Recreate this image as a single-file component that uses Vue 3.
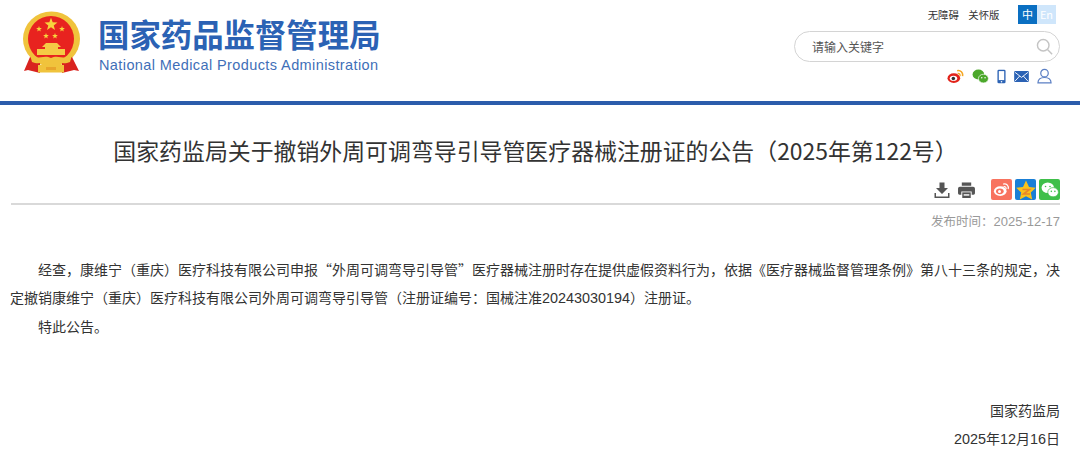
<script setup>
// 五角星顶点
function star(cx, cy, r) {
  const pts = [];
  for (let i = 0; i < 10; i++) {
    const rad = i % 2 ? r * 0.42 : r;
    const a = (Math.PI / 5) * i - Math.PI / 2;
    pts.push((cx + rad * Math.cos(a)).toFixed(2) + ',' + (cy + rad * Math.sin(a)).toFixed(2));
  }
  return pts.join(' ');
}
const smallStars = [
  [17, 18],
  [40, 18],
  [24, 25],
  [33, 25],
];
</script>

<template>
  <div class="page">
    <header class="head">
      <div class="brand">
        <svg class="emblem" viewBox="0 0 60 62" width="60" height="62">
          <!-- 麦穗外环 -->
          <ellipse cx="29.5" cy="28" rx="28.5" ry="27.5" fill="#f0c33c" />
          <circle cx="29" cy="28" r="23" fill="#e8231f" />
          <!-- 五星 -->
          <polygon :points="star(29, 13.5, 6.8)" fill="#f7d33d" />
          <polygon v-for="s in smallStars" :key="s[0]" :points="star(s[0], s[1], 3)" fill="#f7d33d" />
          <!-- 天安门 -->
          <path d="M20 36 L24 32 H35 L39 36 H36 V38 H43 V44 H15 V38 H23 V36 Z" fill="#f5cb45" />
          <!-- 绶带 -->
          <path d="M8 46 L18 50 L18 62 L6 59 L2 60 Z" fill="#d9231f" />
          <path d="M50 46 L40 50 L40 62 L52 59 L57 60 Z" fill="#d9231f" />
          <path d="M8 44 C14 50 22 43 29 47 C36 43 44 50 50 44 L48 51 C42 54 36 50 29 54 C22 50 16 54 10 51 Z" fill="#f0c33c" />
          <rect x="16" y="54" width="26" height="7.5" fill="#f0c33c" />
          <rect x="24" y="56" width="10" height="3" fill="#e8a52c" />
        </svg>
        <div class="brand-text">
          <div class="brand-cn">国家药品监督管理局</div>
          <div class="brand-en">National Medical Products Administration</div>
        </div>
      </div>
      <div class="tools">
        <div class="links">
          <span>无障碍</span>
          <span>关怀版</span>
          <div class="lang"><b class="on">中</b><b class="off">En</b></div>
        </div>
        <div class="search">
          <span>请输入关键字</span>
          <svg viewBox="0 0 20 20" width="17" height="17" fill="none" stroke="#c4c4c4" stroke-width="1.7">
            <circle cx="8.5" cy="8.5" r="6.8" />
            <path d="M13.5 13.5 L19 19" />
          </svg>
        </div>
        <div class="quick">
          <!-- 微博 -->
          <svg viewBox="0 0 20 18" width="17" height="15">
            <ellipse cx="8" cy="11" rx="7.6" ry="5.8" fill="#e2231a" />
            <ellipse cx="7.6" cy="11.2" rx="4.4" ry="3.2" fill="#fff" />
            <circle cx="7.4" cy="11.4" r="2.1" fill="#333" />
            <path d="M12 2 C16 1 19.4 4.5 18.4 8.5" fill="none" stroke="#f5a623" stroke-width="1.9" />
            <path d="M12.5 5.2 C14.5 4.8 16 6.5 15.5 8.5" fill="none" stroke="#f5a623" stroke-width="1.5" />
          </svg>
          <!-- 微信 -->
          <svg viewBox="0 0 20 18" width="17" height="15">
            <ellipse cx="7.5" cy="6.5" rx="7" ry="6" fill="#4ca82b" />
            <ellipse cx="13.5" cy="11.5" rx="6" ry="5.2" fill="#4ca82b" stroke="#fff" stroke-width="0.8" />
            <circle cx="11.5" cy="10.5" r="0.9" fill="#fff" />
            <circle cx="15.5" cy="10.5" r="0.9" fill="#fff" />
          </svg>
          <!-- 手机 -->
          <svg viewBox="0 0 10 16" width="9" height="15">
            <rect x="0.5" y="0.5" width="9" height="15" rx="1.5" fill="#2b62b4" />
            <rect x="2" y="2" width="6" height="10" fill="#fff" />
            <circle cx="5" cy="13.8" r="0.9" fill="#fff" />
          </svg>
          <!-- 邮件 -->
          <svg viewBox="0 0 16 12" width="15" height="11">
            <rect width="16" height="12" rx="1.2" fill="#2b62b4" />
            <path d="M1 1.5 L8 7 L15 1.5 M1 11 L6 5.5 M15 11 L10 5.5" fill="none" stroke="#fff" stroke-width="1" />
          </svg>
          <!-- 用户 -->
          <svg viewBox="0 0 16 16" width="15" height="16" fill="none" stroke="#5b7fc4" stroke-width="1.3">
            <circle cx="8" cy="5" r="4" />
            <path d="M1 15.4 C1 11 4.5 9.6 8 9.6 C11.5 9.6 15 11 15 15.4 Z" />
          </svg>
        </div>
      </div>
    </header>
    <main class="main">
      <h1 class="title">国家药监局关于撤销外周可调弯导引导管医疗器械注册证的公告（2025年第122号）</h1>
      <div class="bar">
        <svg viewBox="0 0 16 16" width="16" height="16" fill="#555">
          <path d="M5.5 0.5 H10.5 V6 H14 L8 12 L2 6 H5.5 Z" />
          <path d="M0.5 11 H2 V14.5 H14 V11 H15.5 V16 H0.5 Z" />
        </svg>
        <svg class="print" viewBox="0 0 18 17" width="17" height="16" fill="#555">
          <path d="M4 0.5 H14 V4 H4 Z" />
          <path d="M2 5 H16 A2 2 0 0 1 18 7 V12 A1.5 1.5 0 0 1 16.5 13.5 H14.5 V10 H3.5 V13.5 H1.5 A1.5 1.5 0 0 1 0 12 V7 A2 2 0 0 1 2 5 Z" />
          <path d="M4.5 11 H13.5 V17 H4.5 Z" />
          <rect x="6" y="13" width="6" height="1.5" fill="#fff" />
        </svg>
        <div class="share">
          <i class="weibo">
            <svg viewBox="0 0 20 18" width="17" height="15">
              <ellipse cx="8.5" cy="11" rx="7.6" ry="5.8" fill="#fff" />
              <ellipse cx="8" cy="11.2" rx="4.6" ry="3.4" fill="#f8735f" />
              <circle cx="7.6" cy="11.5" r="1.8" fill="#fff" />
              <path d="M12 2.5 C16 1.5 19 4.5 18 8.5 M12.5 5.5 C14.5 5 16 6.5 15.5 8.5" fill="none" stroke="#fff" stroke-width="1.4" />
            </svg>
          </i>
          <i class="qzone">
            <svg viewBox="0 0 20 20" width="20" height="20">
              <polygon points="10,0.5 13,7 19.8,7.8 14.8,12.6 16.2,19.6 10,16.2 3.8,19.6 5.2,12.6 0.2,7.8 7,7" fill="#f9c21a" />
              <path d="M6.5 9.5 H13.5 L7.5 14 H14" fill="none" stroke="#e8862a" stroke-width="1.6" />
            </svg>
          </i>
          <i class="wechat">
            <svg viewBox="0 0 20 18" width="18" height="16">
              <ellipse cx="7.5" cy="6.5" rx="7" ry="6" fill="#fff" />
              <circle cx="5" cy="5" r="0.9" fill="#3fbf4a" />
              <circle cx="10" cy="5" r="0.9" fill="#3fbf4a" />
              <ellipse cx="13.5" cy="11.5" rx="6" ry="5.2" fill="#fff" stroke="#3fbf4a" stroke-width="0.8" />
              <circle cx="11.5" cy="10.5" r="0.9" fill="#3fbf4a" />
              <circle cx="15.5" cy="10.5" r="0.9" fill="#3fbf4a" />
            </svg>
          </i>
        </div>
      </div>
      <div class="date">发布时间：<span class="num">2025-12-17</span></div>
      <article class="article">
        <p>经查，康维宁（重庆）医疗科技有限公司申报“外周可调弯导引导管”医疗器械注册时存在提供虚假资料行为，依据《医疗器械监督管理条例》第八十三条的规定，决定撤销康维宁（重庆）医疗科技有限公司外周可调弯导引导管（注册证编号：国械注准<span class="num">20243030194</span>）注册证。</p>
        <p>特此公告。</p>
        <p class="sign first">国家药监局</p>
        <p class="sign"><span class="num">2025</span>年<span class="num">12</span>月<span class="num">16</span>日</p>
      </article>
    </main>
  </div>
</template>

<style>
html,
body {
  margin: 0;
  background: #fff;
}
</style>

<style scoped>
.page {
  width: 1080px;
  height: 455px;
  overflow: hidden;
  font-family: "Noto Sans CJK SC", "Liberation Sans", sans-serif;
  color: #333;
}

.head {
  height: 100px;
  display: flex;
  justify-content: space-between;
}

.brand {
  display: flex;
  padding: 11px 0 0 22px;
}

.emblem {
  margin-right: 16px;
}

.brand-text {
  padding-top: 5px;
}

.brand-cn {
  font-size: 31.4px;
  line-height: 36px;
  font-weight: 700;
  color: #2b62b4;
}

.brand-en {
  margin-top: 4px;
  padding-left: 1px;
  font-family: "Liberation Sans", sans-serif;
  font-size: 14.5px;
  line-height: 18px;
  letter-spacing: 0.4px;
  color: #3f6fb8;
}

.tools {
  width: 286px;
  padding-top: 5px;
  box-sizing: border-box;
}

.links {
  display: flex;
  justify-content: flex-end;
  align-items: center;
  gap: 9.5px;
  padding-right: 24px;
  font-size: 10.4px;
  color: #333;
}

.lang {
  display: flex;
  margin-left: 9px;
}

.lang b {
  width: 19px;
  height: 19px;
  line-height: 19px;
  text-align: center;
  font-weight: 400;
  font-size: 11px;
  color: #fff;
}

.lang .on {
  background: #0a6fc2;
}

.lang .off {
  background: #cfe6fb;
}

.search {
  width: 266px;
  height: 31px;
  margin-top: 7px;
  box-sizing: border-box;
  border: 1px solid #d4d4d4;
  border-radius: 16px;
  padding: 0 6px 0 17px;
  display: flex;
  align-items: center;
  justify-content: space-between;
  font-size: 12px;
  color: #555;
}

.quick {
  display: flex;
  justify-content: flex-end;
  align-items: center;
  gap: 8px;
  margin-top: 6px;
  padding-right: 28px;
}

.main {
  border-top: 4px solid #2b5cab;
  margin-top: 1px;
  padding: 0 20px 0 11px;
}

.title {
  margin: 0;
  padding-top: 29px;
  font-size: 22.9px;
  line-height: 32px;
  font-weight: 400;
  text-align: center;
  color: #333;
}

.bar {
  display: flex;
  align-items: center;
  justify-content: flex-end;
  height: 21px;
  margin-top: 13px;
  padding-bottom: 3px;
  border-bottom: 2px solid #d9d9d9;
}

.print {
  margin-left: 8px;
}

.share {
  display: flex;
  gap: 3px;
  margin-left: 16px;
}

.share i {
  width: 21px;
  height: 21px;
  border-radius: 2px;
  display: flex;
  align-items: center;
  justify-content: center;
}

.weibo {
  background: #f8735f;
}

.qzone {
  background: #1a7fd6;
}

.wechat {
  background: #3fbf4a;
}

.date {
  margin-top: 7px;
  text-align: right;
  font-size: 12.5px;
  line-height: 18px;
  color: #999;
}

.date .num {
  font-size: 13px;
}

.num {
  font-family: "Liberation Sans", sans-serif;
}

.article {
  margin-top: 24px;
  margin-right: -1px;
  font-size: 14px;
  color: #333;
}

.article p {
  margin: 0 0 0 -1px;
  line-height: 28px;
  text-indent: 2em;
}

.article .num {
  display: inline-block;
  font-size: 14.4px;
  text-indent: 0;
}

.article .sign {
  margin-right: 1px;
  text-align: right;
  text-indent: 0;
}

.article .first {
  margin-top: 56px;
}
</style>
